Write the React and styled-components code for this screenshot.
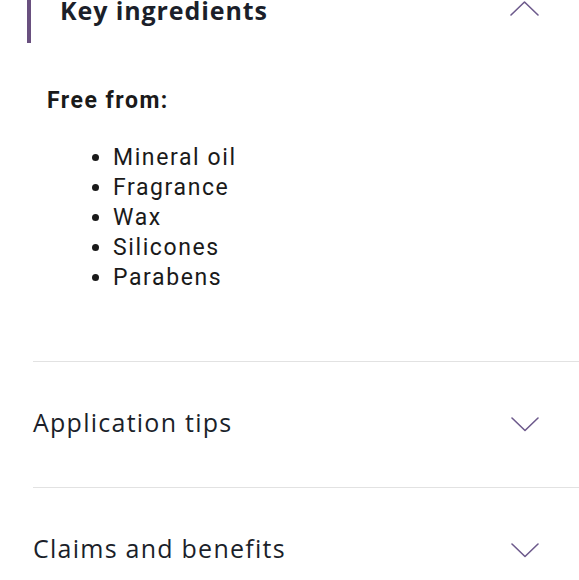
import React from "react";
import styled, { createGlobalStyle } from "styled-components";

const GlobalStyle = createGlobalStyle`
  html, body { margin: 0; padding: 0; background: #ffffff; }
  body { font-family: "Open Sans", sans-serif; overflow: hidden; }
`;

const Accordion = styled.div`
  width: 579px;
  display: flex;
  flex-direction: column;
`;

const OpenHeader = styled.div`
  margin-left: 27px;
  border-left: 4px solid #69507f;
  padding-left: 29px;
  padding-right: 40px;
  height: 43px;
  display: flex;
  justify-content: space-between;
  align-items: flex-start;
`;

const OpenTitle = styled.h3`
  margin: 0;
  font-family: "Open Sans", sans-serif;
  font-weight: 700;
  font-size: 25px;
  letter-spacing: 0.9px;
  line-height: 19px;
  padding-top: 1px;
  color: #1b1f2a;
`;

const Panel = styled.div`
  padding: 45px 0 68px 47px;
  font-family: Roboto, sans-serif;
  color: #1a1a1a;
`;

const PanelLabel = styled.p`
  margin: 0;
  font-weight: 700;
  font-size: 23px;
  letter-spacing: 1.5px;
  line-height: 26px;
`;

const List = styled.ul`
  margin: 29px 0 0 0;
  padding-left: 66px;
  font-size: 23px;
  letter-spacing: 1.6px;
  line-height: 30px;
`;

const Row = styled.div`
  margin-left: 33px;
  border-top: 1px solid #e2e2e2;
  padding: 44px 40px 49px 0;
  display: flex;
  justify-content: space-between;
  align-items: flex-start;
`;

const RowTitle = styled.h3`
  margin: 0;
  font-family: "Open Sans", sans-serif;
  font-weight: 400;
  font-size: 25px;
  letter-spacing: 1.25px;
  line-height: 32px;
  color: #1b1f2a;
`;

const ChevronSvg = styled.svg`
  display: block;
  flex: none;
  margin-top: ${(p) => p.$offset}px;
`;

function Chevron({ up, offset = 0 }) {
  return (
    <ChevronSvg $offset={offset} width="29" height="15" viewBox="0 0 29 15" fill="none">
      <polyline
        points={up ? "1,14 14.5,1 28,14" : "2,1 15,13.5 28,1"}
        stroke="#6d5a8c"
        strokeWidth="1.6"
        strokeLinecap="round"
        strokeLinejoin="round"
      />
    </ChevronSvg>
  );
}

const items = ["Mineral oil", "Fragrance", "Wax", "Silicones", "Parabens"];

export default function App() {
  return (
    <>
      <GlobalStyle />
      <Accordion>
        <OpenHeader>
          <OpenTitle>Key ingredients</OpenTitle>
          <Chevron up offset={1} />
        </OpenHeader>
        <Panel>
          <PanelLabel>Free from:</PanelLabel>
          <List>
            {items.map((i) => (
              <li key={i}>{i}</li>
            ))}
          </List>
        </Panel>
        <Row>
          <RowTitle>Application tips</RowTitle>
          <Chevron offset={11} />
        </Row>
        <Row>
          <RowTitle>Claims and benefits</RowTitle>
          <Chevron offset={11} />
        </Row>
      </Accordion>
    </>
  );
}
